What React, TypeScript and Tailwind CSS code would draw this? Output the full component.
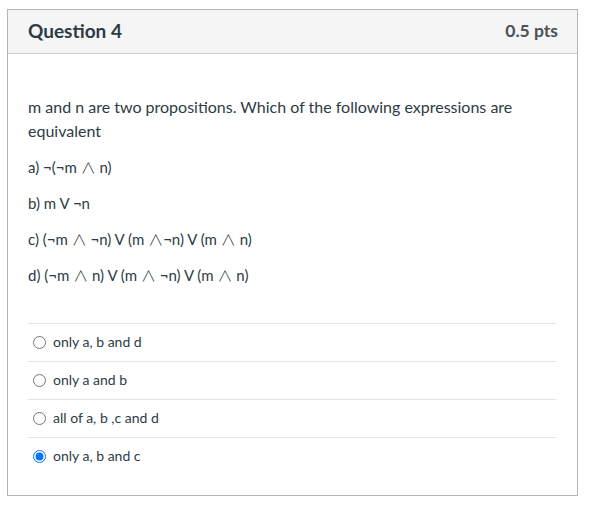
const expressions = [
  "a) ¬(¬m ∧ n)",
  "b) m V ¬n",
  "c) (¬m ∧ ¬n) V (m ∧¬n) V (m ∧ n)",
  "d) (¬m ∧ n) V (m ∧ ¬n) V (m ∧ n)",
];

const answers = [
  { label: "only a, b and d", checked: false },
  { label: "only a and b", checked: false },
  { label: "all of a, b ,c and d", checked: false },
  { label: "only a, b and c", checked: true },
];

// Lato has no ∧; the screenshot shows a tall, thin fallback glyph
function Expr({ text }: { text: string }) {
  const parts = text.split("∧");
  return (
    <>
      {parts.map((p, i) => (
        <span key={i}>
          {p}
          {i < parts.length - 1 && (
            <span
              className="font-light leading-[0]"
              style={{ fontFamily: "'Noto Sans CJK JP', 'DejaVu Sans', sans-serif" }}
            >
              ∧
            </span>
          )}
        </span>
      ))}
    </>
  );
}

export default function App() {
  return (
    <div
      className="w-[594px] h-[505px] bg-white pt-[9px] pl-[7px]"
      style={{ fontFamily: "Lato, 'Liberation Sans', sans-serif" }}
    >
      <div className="w-[571px] h-[487px] border border-[#b5b5b5] flex flex-col">
        <div className="h-[44px] bg-[#f5f5f5] border-b border-[#c7cdd1] flex items-center justify-between pl-[20px] pr-[19px]">
          <h2 className="text-[19px] font-bold text-[#2d3b45]">Question 4</h2>
          <span className="text-[17.5px] font-bold text-[#4b5157]">0.5 pts</span>
        </div>
        <div className="pt-[41px] px-[20px] text-[#2d3b45]">
          <p className="text-[16px] leading-[24px]">
            m and n are two propositions. Which of the following expressions are
            <br />
            equivalent
          </p>
          {expressions.map((e) => (
            <p key={e} className="h-[24px] text-[15px] leading-[24px] mt-[12px]">
              <Expr text={e} />
            </p>
          ))}
          <div className="mt-[36px] mr-[1px]">
            {answers.map((a) => (
              <label
                key={a.label}
                className="h-[38px] border-t border-[#e3e3e3] flex items-center text-[14px] pl-[5px]"
              >
                <input
                  type="radio"
                  name="q4"
                  defaultChecked={a.checked}
                  className="w-[13px] h-[13px] m-0 mr-[7px]"
                />
                <span className="mb-[2px]">{a.label}</span>
              </label>
            ))}
          </div>
        </div>
      </div>
    </div>
  );
}
